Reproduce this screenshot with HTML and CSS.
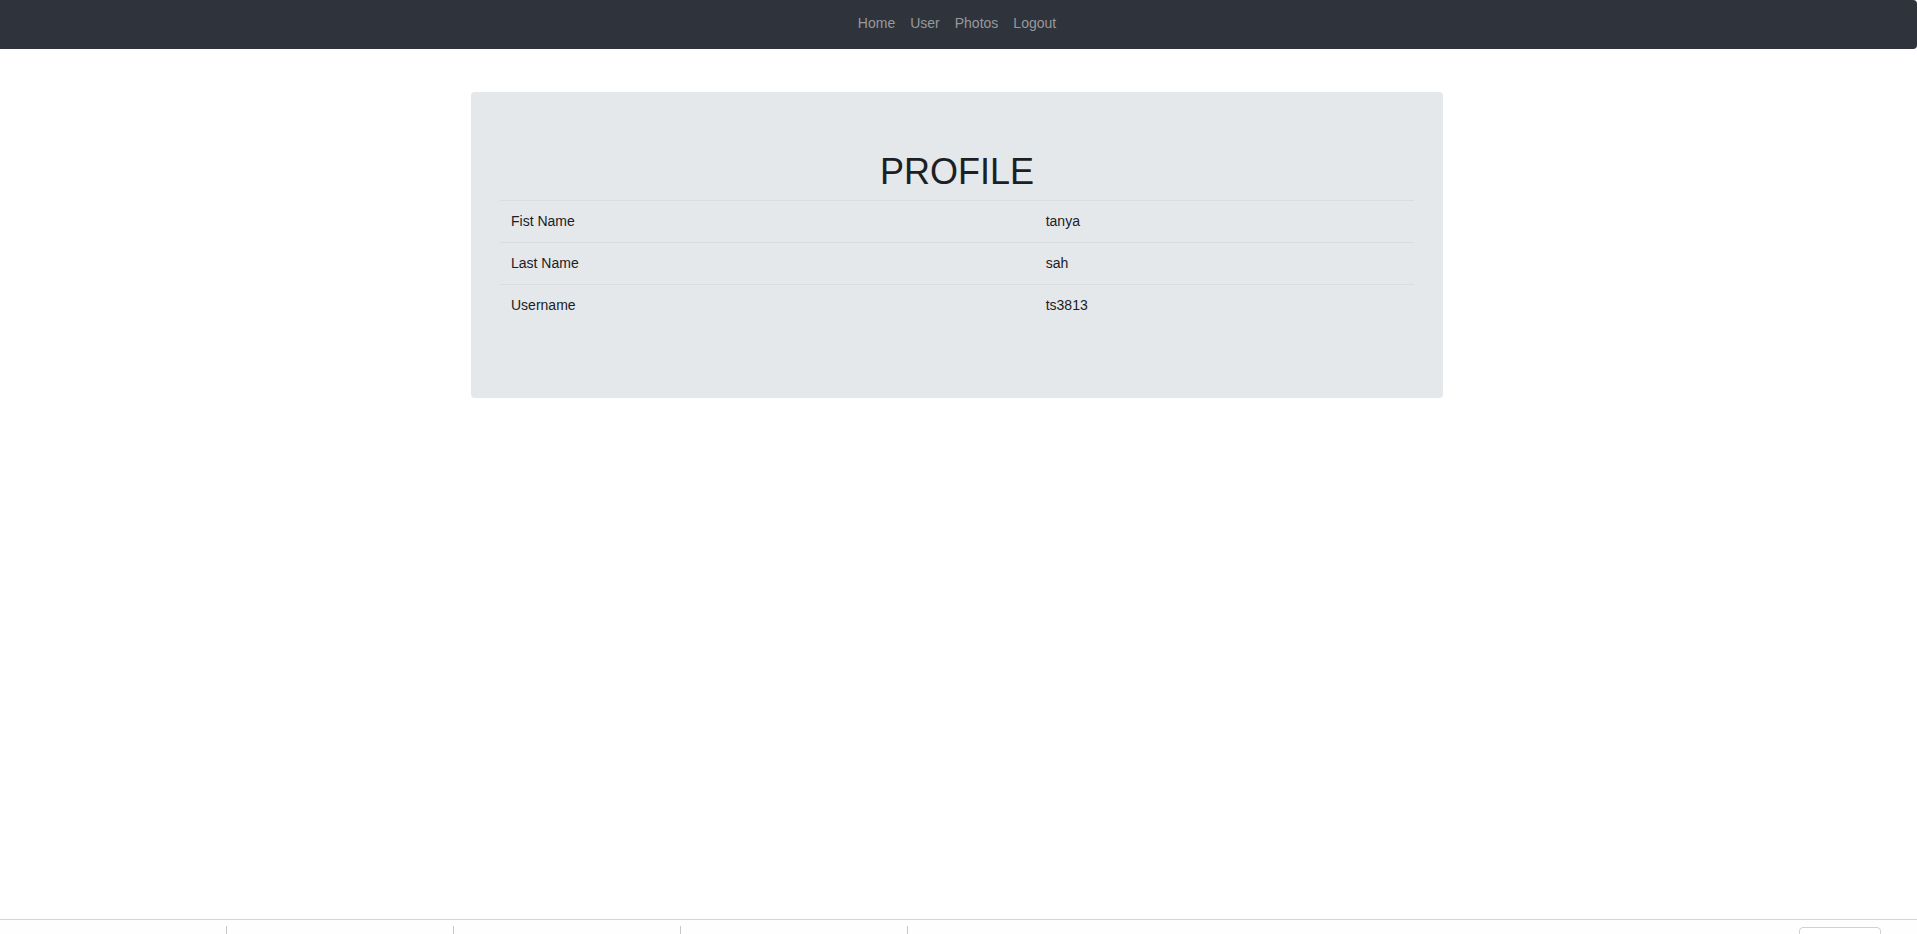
FILE: index.html
```html
<!DOCTYPE html>
<html lang="en">
<head>
<meta charset="utf-8">
<title>Profile</title>
<link rel="stylesheet" href="styles.css">
</head>
<body>
<nav class="navbar">
  <a href="#home">Home</a>
  <a href="#user">User</a>
  <a href="#photos">Photos</a>
  <a href="#logout">Logout</a>
</nav>
<main class="content">
  <section class="card">
    <h1 class="card-title">PROFILE</h1>
    <table class="details">
      <tbody>
        <tr><th scope="row">Fist Name</th><td>tanya</td></tr>
        <tr><th scope="row">Last Name</th><td>sah</td></tr>
        <tr><th scope="row">Username</th><td>ts3813</td></tr>
      </tbody>
    </table>
  </section>
</main>
<footer class="shelf">
  <div class="shelf-items">
    <span class="shelf-item"></span>
    <span class="shelf-item"></span>
    <span class="shelf-item"></span>
    <span class="shelf-item"></span>
  </div>
  <button class="shelf-button" type="button" aria-label="Show all"></button>
</footer>
</body>
</html>
```

FILE: styles.css
```css
* {
  box-sizing: border-box;
}

body {
  margin: 0;
  height: 100vh;
  overflow: hidden;
  display: flex;
  flex-direction: column;
  background: #fff;
  color: #1c2024;
  font-family: "Liberation Sans", Arial, sans-serif;
  font-size: 14px;
  line-height: 21px;
}

.navbar {
  display: flex;
  justify-content: center;
  gap: 15px;
  padding: 13px 3px 15px 0;
  border-radius: 0 4px 4px 0;
  background: #2f333b;
}

.navbar a {
  color: #98999c;
  text-decoration: none;
}

.content {
  flex: 1;
  padding: 43px 3px 0 0;
}

.card {
  width: 972px;
  max-width: 100%;
  margin: 0 auto;
  padding: 58px 29px 72px;
  border-radius: 4px;
  background: #e4e8eb;
}

.card-title {
  margin: 0 0 6px;
  font-size: 36px;
  font-weight: 400;
  line-height: 44px;
  text-align: center;
}

.details {
  width: 100%;
  border-collapse: separate;
  border-spacing: 0;
}

.details th,
.details td {
  padding: 10px 11px;
  border-top: 1px solid #d9dde0;
  font-weight: 400;
  text-align: left;
}

.details th {
  width: 58.5%;
}

.shelf {
  display: flex;
  justify-content: space-between;
  height: 15px;
  padding: 6px 36px 0 0;
  border-top: 1px solid #d3d4d6;
  background: #fefefe;
  overflow: hidden;
}

.shelf-items {
  display: flex;
}

.shelf-item {
  width: 227px;
  border-right: 1px solid #c8c8ca;
}

.shelf-button {
  width: 82px;
  height: 26px;
  margin-top: 1px;
  border: 1px solid #d0d1d4;
  border-radius: 4px;
  background: #fff;
}
```
